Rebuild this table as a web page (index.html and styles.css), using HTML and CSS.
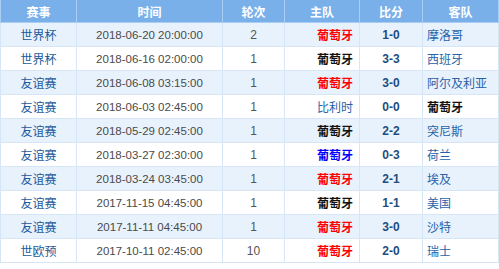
FILE: index.html
```html
<!DOCTYPE html>
<html lang="zh-CN">
<head>
<meta charset="utf-8">
<link rel="stylesheet" href="styles.css">
</head>
<body>
<table class="matches">
  <colgroup>
    <col class="c-event"><col class="c-time"><col class="c-round"><col class="c-home"><col class="c-score"><col class="c-away">
  </colgroup>
  <thead>
    <tr><th>赛事</th><th>时间</th><th>轮次</th><th>主队</th><th>比分</th><th>客队</th></tr>
  </thead>
  <tbody>
    <tr class="alt"><td class="event">世界杯</td><td class="time">2018-06-20 20:00:00</td><td class="round">2</td><td class="home win">葡萄牙</td><td class="score">1-0</td><td class="away">摩洛哥</td></tr>
    <tr><td class="event">世界杯</td><td class="time">2018-06-16 02:00:00</td><td class="round">1</td><td class="home draw">葡萄牙</td><td class="score">3-3</td><td class="away">西班牙</td></tr>
    <tr class="alt"><td class="event">友谊赛</td><td class="time">2018-06-08 03:15:00</td><td class="round">1</td><td class="home win">葡萄牙</td><td class="score">3-0</td><td class="away">阿尔及利亚</td></tr>
    <tr><td class="event">友谊赛</td><td class="time">2018-06-03 02:45:00</td><td class="round">1</td><td class="home">比利时</td><td class="score">0-0</td><td class="away draw">葡萄牙</td></tr>
    <tr class="alt"><td class="event">友谊赛</td><td class="time">2018-05-29 02:45:00</td><td class="round">1</td><td class="home draw">葡萄牙</td><td class="score">2-2</td><td class="away">突尼斯</td></tr>
    <tr><td class="event">友谊赛</td><td class="time">2018-03-27 02:30:00</td><td class="round">1</td><td class="home loss">葡萄牙</td><td class="score">0-3</td><td class="away">荷兰</td></tr>
    <tr class="alt"><td class="event">友谊赛</td><td class="time">2018-03-24 03:45:00</td><td class="round">1</td><td class="home win">葡萄牙</td><td class="score">2-1</td><td class="away">埃及</td></tr>
    <tr><td class="event">友谊赛</td><td class="time">2017-11-15 04:45:00</td><td class="round">1</td><td class="home draw">葡萄牙</td><td class="score">1-1</td><td class="away">美国</td></tr>
    <tr class="alt"><td class="event">友谊赛</td><td class="time">2017-11-11 04:45:00</td><td class="round">1</td><td class="home win">葡萄牙</td><td class="score">3-0</td><td class="away">沙特</td></tr>
    <tr><td class="event">世欧预</td><td class="time">2017-10-11 02:45:00</td><td class="round">10</td><td class="home win">葡萄牙</td><td class="score">2-0</td><td class="away">瑞士</td></tr>
  </tbody>
</table>
</body>
</html>
```

FILE: styles.css
```css
html, body {
  margin: 0;
  padding: 0;
  background: #ffffff;
}

.matches {
  width: 498px;
  border-collapse: collapse;
  table-layout: fixed;
  font-family: "Liberation Sans", "Noto Sans CJK SC", sans-serif;
  font-size: 12px;
}

.c-event { width: 76px; }
.c-time { width: 146px; }
.c-round { width: 62px; }
.c-home { width: 75px; }
.c-score { width: 63px; }
.c-away { width: 76px; }

.matches th {
  height: 22px;
  padding: 0;
  background: #79b0ea;
  color: #ffffff;
  font-weight: bold;
  font-family: "Noto Sans CJK SC", sans-serif;
  font-size: 12px;
  text-align: center;
  border: 1px solid #a9cdf3;
  border-top: none;
}

.matches td {
  height: 23px;
  padding: 0;
  border: 1px solid #d6e6f7;
  text-align: center;
  color: #444444;
  white-space: nowrap;
}

.matches tr.alt td {
  background: #e8f2fd;
}

.matches td.event {
  color: #20599a;
  font-family: "Noto Sans CJK SC", sans-serif;
}

.matches td.time {
  color: #4a4a4a;
  font-size: 11.5px;
}

.matches td.round {
  color: #555555;
}

.matches td.home {
  text-align: right;
  padding-right: 6px;
  color: #2862a8;
  font-family: "Noto Sans CJK SC", sans-serif;
}

.matches td.away {
  text-align: left;
  padding-left: 4px;
  color: #2862a8;
  font-family: "Noto Sans CJK SC", sans-serif;
}

.matches td.win {
  color: #ff0000;
  font-weight: bold;
}

.matches td.draw {
  color: #111111;
  font-weight: bold;
}

.matches td.loss {
  color: #0000ff;
  font-weight: bold;
}

.matches td.score {
  color: #1f4d7d;
  font-weight: bold;
}
```
